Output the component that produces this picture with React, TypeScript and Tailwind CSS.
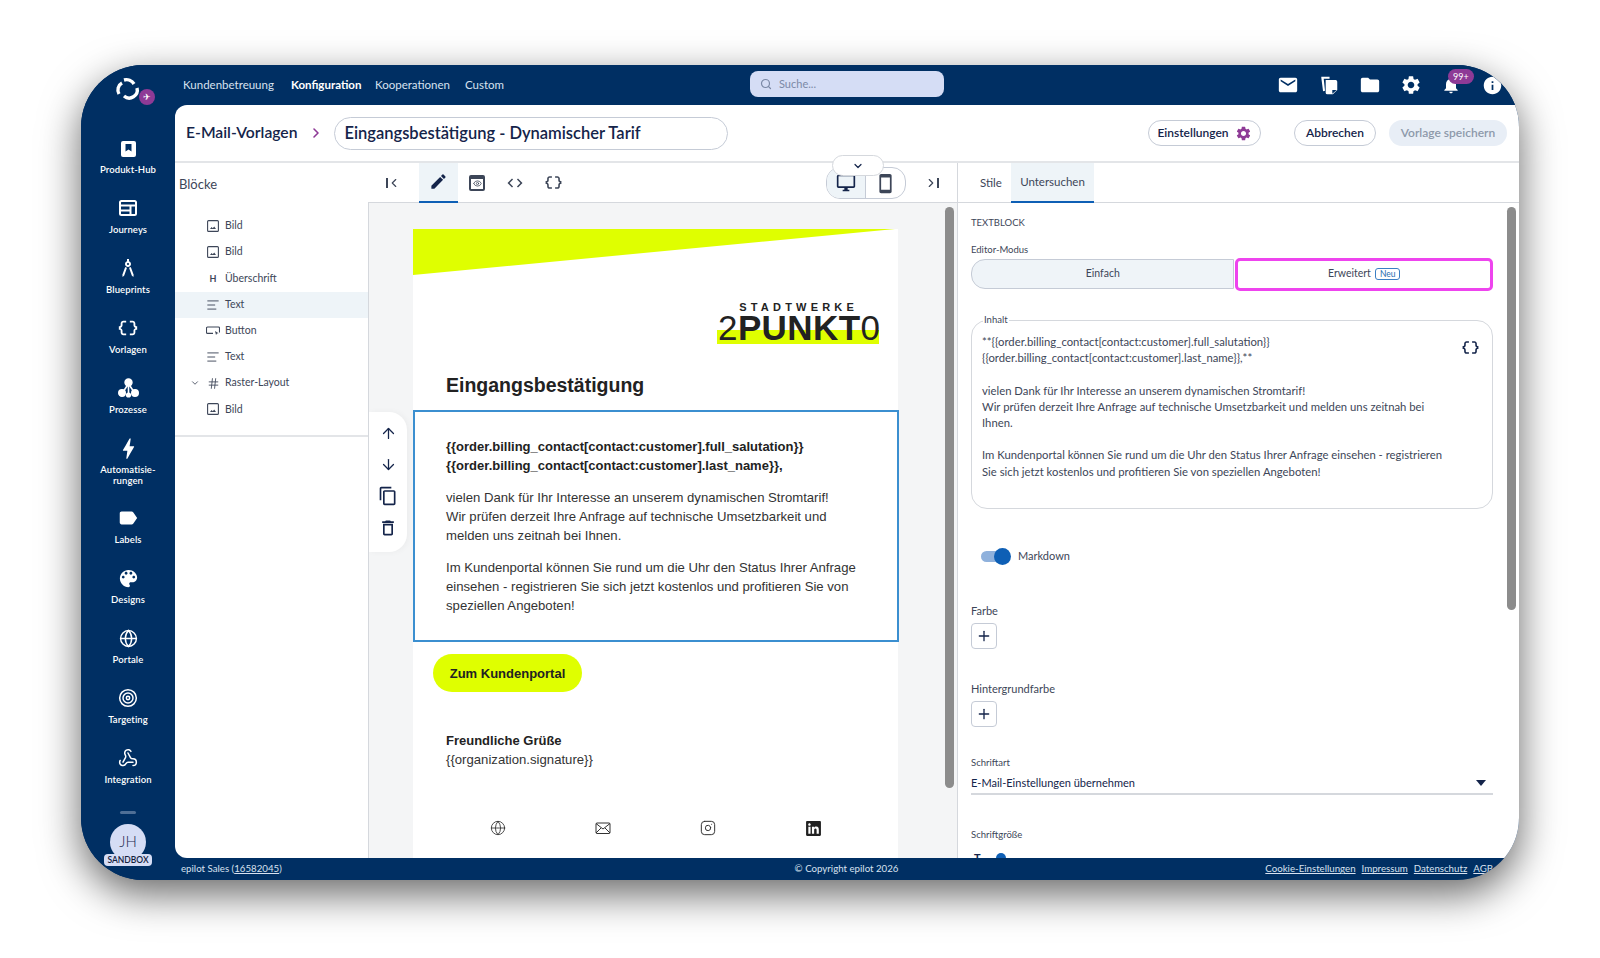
import React from 'react'
import { Search, ChevronRight, ChevronDown, ChevronLeft, Globe, Hash, AlignLeft, Target, Webhook, Instagram, Eye, ArrowUp, ArrowDown, Plus } from 'lucide-react'
import { FaLinkedin } from 'react-icons/fa'

const navy = 'bg-[#002f63]'

// material style glyphs, lucide has no filled versions of these
const paths = {
  mail: 'M20 4H4c-1.1 0-1.99.9-1.99 2L2 18c0 1.1.9 2 2 2h16c1.1 0 2-.9 2-2V6c0-1.1-.9-2-2-2zm0 4-8 5-8-5V6l8 5 8-5v2z',
  folder: 'M10 4H4c-1.1 0-1.99.9-1.99 2L2 18c0 1.1.9 2 2 2h16c1.1 0 2-.9 2-2V8c0-1.1-.9-2-2-2h-8l-2-2z',
  gear: 'M19.14 12.94c.04-.3.06-.61.06-.94 0-.32-.02-.64-.07-.94l2.03-1.58a.49.49 0 0 0 .12-.61l-1.92-3.32a.488.488 0 0 0-.59-.22l-2.39.96c-.5-.38-1.03-.7-1.62-.94l-.36-2.54a.484.484 0 0 0-.48-.41h-3.84c-.24 0-.43.17-.47.41l-.36 2.54c-.59.24-1.13.57-1.62.94l-2.39-.96c-.22-.08-.47 0-.59.22L2.74 8.87c-.12.21-.08.47.12.61l2.03 1.58c-.05.3-.09.63-.09.94s.02.64.07.94l-2.03 1.58a.49.49 0 0 0-.12.61l1.92 3.32c.12.22.37.29.59.22l2.39-.96c.5.38 1.03.7 1.62.94l.36 2.54c.05.24.24.41.48.41h3.84c.24 0 .44-.17.47-.41l.36-2.54c.59-.24 1.13-.56 1.62-.94l2.39.96c.22.08.47 0 .59-.22l1.92-3.32c.12-.22.07-.47-.12-.61l-2.01-1.58zM12 15.6c-1.98 0-3.6-1.62-3.6-3.6s1.62-3.6 3.6-3.6 3.6 1.62 3.6 3.6-1.62 3.6-3.6 3.6z',
  bell: 'M12 22c1.1 0 2-.9 2-2h-4c0 1.1.89 2 2 2zm6-6v-5c0-3.07-1.64-5.64-4.5-6.32V4c0-.83-.67-1.5-1.5-1.5s-1.5.67-1.5 1.5v.68C7.63 5.36 6 7.92 6 11v5l-2 2v1h16v-1l-2-2z',
  info: 'M12 2C6.48 2 2 6.48 2 12s4.48 10 10 10 10-4.48 10-10S17.52 2 12 2zm1 15h-2v-6h2v6zm0-8h-2V7h2v2z',
  copy: 'M16 1H4c-1.1 0-2 .9-2 2v14h2V3h12V1zm3 4H8c-1.1 0-2 .9-2 2v14c0 1.1.9 2 2 2h11c1.1 0 2-.9 2-2V7c0-1.1-.9-2-2-2zm0 16H8V7h11v14z',
  trash: 'M6 19c0 1.1.9 2 2 2h8c1.1 0 2-.9 2-2V7H6v12zM8 9h8v10H8V9zm7.5-5l-1-1h-5l-1 1H5v2h14V4z',
  label: 'M17.63 5.84C17.27 5.33 16.67 5 16 5L5 5.01C3.9 5.01 3 5.9 3 7v10c0 1.1.9 1.99 2 1.99L16 19c.67 0 1.27-.33 1.63-.84L22 12l-4.37-6.16z',
  palette: 'M12 3c-4.97 0-9 4.03-9 9s4.03 9 9 9c.83 0 1.5-.67 1.5-1.5 0-.39-.15-.74-.39-1.01-.23-.26-.38-.61-.38-.99 0-.83.67-1.5 1.5-1.5H16c2.76 0 5-2.24 5-5 0-4.42-4.03-8-9-8zm-5.5 9c-.83 0-1.5-.67-1.5-1.5S5.67 9 6.5 9 8 9.67 8 10.5 7.33 12 6.5 12zm3-4C8.67 8 8 7.33 8 6.5S8.67 5 9.5 5s1.5.67 1.5 1.5S10.33 8 9.5 8zm5 0c-.83 0-1.5-.67-1.5-1.5S13.67 5 14.5 5s1.5.67 1.5 1.5S15.33 8 14.5 8zm3 4c-.83 0-1.5-.67-1.5-1.5S16.67 9 17.5 9s1.5.67 1.5 1.5-.67 1.5-1.5 1.5z',
  bolt: 'M11 21h-1l1-7H7.5c-.58 0-.57-.32-.38-.66.19-.34.05-.08.07-.12C8.48 10.94 10.42 7.54 13 3h1l-1 7h3.5c.49 0 .56.33.47.51l-.07.15C12.96 17.55 11 21 11 21z',
  desktop: 'M21 2H3c-1.1 0-2 .9-2 2v12c0 1.1.9 2 2 2h7v2H8v2h8v-2h-2v-2h7c1.1 0 2-.9 2-2V4c0-1.1-.9-2-2-2zm0 14H3V4h18v12z',
  phone: 'M17 1.01L7 1c-1.1 0-2 .9-2 2v18c0 1.1.9 2 2 2h10c1.1 0 2-.9 2-2V3c0-1.1-.9-1.99-2-1.99zM17 19H7V5h10v14z',
  edit: 'M3 17.25V21h3.75L17.81 9.94l-3.75-3.75L3 17.25zM20.71 7.04a1 1 0 0 0 0-1.41l-2.34-2.34a1 1 0 0 0-1.41 0l-1.83 1.83 3.75 3.75 1.83-1.83z',
  blueprint: 'M6.36 18.78L6.61 21l1.62-1.54 2.77-7.6c-.68-.17-1.28-.51-1.77-.98L6.36 18.78zm8.41-7.9c-.49.47-1.1.81-1.77.98l2.77 7.6L17.39 21l.26-2.22-2.88-7.9zM15 8c0-1.3-.84-2.4-2-2.82V3h-2v2.18C9.84 5.6 9 6.7 9 8c0 1.66 1.34 3 3 3s3-1.34 3-3zm-3 1c-.55 0-1-.45-1-1s.45-1 1-1 1 .45 1 1-.45 1-1 1z',
  braces: 'M4 7v2c0 .55-.45 1-1 1H2v4h1c.55 0 1 .45 1 1v2c0 1.65 1.35 3 3 3h3v-2H7c-.55 0-1-.45-1-1v-2c0-1.3-.84-2.42-2-2.83v-.34C5.16 11.42 6 10.3 6 9V7c0-.55.45-1 1-1h3V4H7C5.35 4 4 5.35 4 7zm17 3c-.55 0-1-.45-1-1V7c0-1.65-1.35-3-3-3h-3v2h3c.55 0 1 .45 1 1v2c0 1.3.84 2.42 2 2.83v.34c-1.16.41-2 1.52-2 2.83v2c0 .55-.45 1-1 1h-3v2h3c1.65 0 3-1.35 3-3v-2c0-.55.45-1 1-1h1v-4h-1z',
  code: 'M9.4 16.6L4.8 12l4.6-4.6L8 6l-6 6 6 6 1.4-1.4zm5.2 0l4.6-4.6-4.6-4.6L16 6l6 6-6 6-1.4-1.4z',
}

function Glyph({ d, size = 20, color = '#fff' }: { d: string; size?: number; color?: string }) {
  return (
    <svg width={size} height={size} viewBox="0 0 24 24" fill={color} className="shrink-0">
      <path d={d} />
    </svg>
  )
}

function ProduktIcon() {
  return (
    <svg width="17" height="17" viewBox="0 0 17 17">
      <path fill="#fff" d="M3 1h11a2 2 0 0 1 2 2v12a2 2 0 0 1-2 2H3a2 2 0 0 1-2-2V3a2 2 0 0 1 2-2z" />
      <path fill="#002f63" d="M5.5 4h6v7.5l-3-2-3 2z" />
    </svg>
  )
}

function JourneyIcon() {
  return (
    <svg width="18" height="16" viewBox="0 0 18 16" fill="none" stroke="#fff" strokeWidth="2">
      <rect x="1" y="1" width="16" height="14" rx="1.5" />
      <path d="M1 5.5h16M1 10.5h10M11.5 5.5V15" />
    </svg>
  )
}

function ProcessIcon() {
  return (
    <svg width="21" height="21" viewBox="0 0 21 21" fill="#fff" stroke="#fff" strokeWidth="1.6">
      <circle cx="10.5" cy="4.5" r="3.4" />
      <circle cx="4" cy="15" r="3.2" />
      <circle cx="17" cy="15" r="3.2" />
      <circle cx="10.5" cy="17" r="1.8" />
      <path d="M10.5 7v9M9 8l-4 6M12 8l4 6" fill="none" />
    </svg>
  )
}

function BlockImage() {
  return (
    <svg width="12" height="12" viewBox="0 0 12 12" fill="none" stroke="#3d4658" strokeWidth="1.1">
      <rect x=".6" y=".6" width="10.8" height="10.8" rx="1" />
      <path d="M3 9l1.6-2 1.2 1.2L7.2 6.6 9 9z" fill="#3d4658" stroke="none" />
    </svg>
  )
}

function BlockButton() {
  return (
    <svg width="14" height="10" viewBox="0 0 14 10" fill="none" stroke="#3d4658" strokeWidth="1.1">
      <path d="M7 7.4H1.5a1 1 0 0 1-1-1V2a1 1 0 0 1 1-1h11a1 1 0 0 1 1 1v4.4" />
      <path d="M9 5l1 4 1-1.5 1.6-.3z" fill="#3d4658" stroke="none" />
    </svg>
  )
}

function CopiesIcon() {
  return (
    <svg width="22" height="22" viewBox="0 0 20 20">
      <path fill="#fff" d="M3 2.5h7.5v1.8H5.2l1.2 11-1.8.4L3 3.5z" />
      <path fill="#fff" d="M7 5.5h9a1.5 1.5 0 0 1 1.5 1.5v7.5l-4 4H8.5A1.5 1.5 0 0 1 7 17z" />
      <path fill="#002f63" d="M13 18v-3.5h4z" />
    </svg>
  )
}

function LetterIcon() {
  return (
    <svg width="16" height="16" viewBox="0 0 16 16" fill="none" stroke="#333" strokeWidth="1">
      <rect x="1" y="3" width="14" height="10.5" rx="1" />
      <path d="M1 3.5l7 5.5 7-5.5M1 13l5-5M15 13l-5-5" />
    </svg>
  )
}

const sideItems = [
  { label: 'Produkt-Hub', icon: <ProduktIcon /> },
  { label: 'Journeys', icon: <JourneyIcon /> },
  { label: 'Blueprints', icon: <Glyph d={paths.blueprint} size={24} /> },
  { label: 'Vorlagen', icon: <Glyph d={paths.braces} size={22} /> },
  { label: 'Prozesse', icon: <ProcessIcon /> },
  { label: 'Automatisie-\nrungen', icon: <Glyph d={paths.bolt} size={27} />, tall: true },
  { label: 'Labels', icon: <Glyph d={paths.label} size={22} /> },
  { label: 'Designs', icon: <Glyph d={paths.palette} size={23} /> },
  { label: 'Portale', icon: <Globe size={19} color="#fff" strokeWidth={1.8} /> },
  { label: 'Targeting', icon: <Target size={20} color="#fff" strokeWidth={1.8} /> },
  { label: 'Integration', icon: <Webhook size={20} color="#fff" strokeWidth={1.8} /> },
]

const blocks = [
  { label: 'Bild', icon: <BlockImage /> },
  { label: 'Bild', icon: <BlockImage /> },
  { label: 'Überschrift', icon: <span className="text-[9px] font-bold leading-none">H</span> },
  { label: 'Text', icon: <AlignLeft size={14} strokeWidth={1.6} />, active: true },
  { label: 'Button', icon: <BlockButton /> },
  { label: 'Text', icon: <AlignLeft size={14} strokeWidth={1.6} /> },
  { label: 'Raster-Layout', icon: <Hash size={13} strokeWidth={1.6} />, expand: true },
  { label: 'Bild', icon: <BlockImage /> },
]

function Sidebar() {
  return (
    <aside className={`${navy} flex w-[94px] shrink-0 flex-col items-center text-white`}>
      <div className="relative mt-[9px] h-[40px] w-[44px]">
        <svg width="26" height="26" viewBox="0 0 26 26" fill="none" stroke="#fff" strokeWidth="3.4" className="absolute left-[9px] top-[3px]">
          <path d="M4 17a8 8 0 0 1 3-11" />
          <path d="M9 3a9 9 0 0 1 10 4" />
          <path d="M22 11a8 8 0 0 1-13 8" />
        </svg>
        <span className="absolute left-[33px] top-[15px] flex h-[16px] w-[16px] items-center justify-center rounded-full bg-[#8e3a96] text-[9px]">✈</span>
      </div>
      <div className="mt-[23px] flex flex-col">
        {sideItems.map((item) => (
          <div key={item.label} className={`flex w-[94px] flex-col items-center ${item.tall ? 'h-[70px]' : 'h-[60px]'}`}>
            <div className="flex h-[22px] items-center justify-center">{item.icon}</div>
            <div className="mt-[5px] whitespace-pre-line text-center text-[9.5px] font-semibold leading-[11px] tracking-[0.1px]">{item.label}</div>
          </div>
        ))}
      </div>
      <div className="mt-[4px] h-[3px] w-[16px] rounded bg-[#4f6f96]" />
      <div className="relative mt-[10px] flex h-[36px] w-[36px] items-center justify-center rounded-full bg-[#d5ddf5] pb-[2px] text-[15px] font-light text-[#1d2b50]">
        JH
        <span className="absolute left-[-6px] top-[30px] w-[48px] rounded-[4px] bg-[#d5ddf5] text-center text-[8.5px] font-semibold leading-[12px] text-[#14213d]">SANDBOX</span>
      </div>
    </aside>
  )
}

function TopBar() {
  return (
    <header className={`${navy} flex h-[40px] shrink-0 items-center text-white`}>
      <nav className="ml-[8px] flex w-[567px] items-center text-[11.5px] text-[#d8e2f0]">
        <span className="w-[108px]">Kundenbetreuung</span>
        <span className="w-[84px] font-bold text-white">Konfiguration</span>
        <span className="w-[90px]">Kooperationen</span>
        <span>Custom</span>
      </nav>
      <div className="mb-[2px] flex h-[26px] w-[194px] items-center gap-[7px] rounded-lg bg-[#d5ddf5] px-[10px] text-[11px] text-[#7b89a6]">
        <Search size={12} strokeWidth={2.4} />
        Suche...
      </div>
      <div className="ml-auto mr-[16px] flex items-center gap-[19px]">
        <Glyph d={paths.mail} size={22} />
        <CopiesIcon />
        <Glyph d={paths.folder} size={22} />
        <Glyph d={paths.gear} size={22} />
        <div className="relative mr-[2px]">
          <Glyph d={paths.bell} size={20} />
          <span className="absolute left-[7px] top-[-6px] rounded-full bg-[#8e3a96] px-[5px] text-[9px] leading-[15px]">99+</span>
        </div>
        <Glyph d={paths.info} size={21} />
      </div>
    </header>
  )
}

function PageHeader() {
  return (
    <div className="flex h-[58px] shrink-0 items-center border-b-2 border-[#e3e5e8] text-[#14244a]">
      <span className="ml-[11px] text-[15.7px] font-semibold">E-Mail-Vorlagen</span>
      <ChevronRight size={16} className="ml-[10px] text-[#8e3a96]" strokeWidth={2.4} />
      <div className="ml-[10px] flex h-[33px] w-[394px] items-center rounded-full border border-[#c5cbd6] pl-[10px] text-[16.5px] font-semibold">
        Eingangsbestätigung - Dynamischer Tarif
      </div>
      <div className="ml-auto mr-[12px] flex items-center text-[12px] font-semibold">
        <div className="flex h-[26px] w-[113px] items-center justify-center gap-[6px] rounded-full border border-[#c5cbd6]">
          Einstellungen
          <Glyph d={paths.gear} size={17} color="#8e3a96" />
        </div>
        <div className="ml-[33px] flex h-[26px] w-[82px] items-center justify-center rounded-full border border-[#c5cbd6]">Abbrechen</div>
        <div className="ml-[13px] flex h-[26px] w-[118px] items-center justify-center rounded-full bg-[#e8eef6] text-[#8d99aa]">Vorlage speichern</div>
      </div>
    </div>
  )
}

function BlocksPanel() {
  return (
    <div className="flex w-[193px] shrink-0 flex-col">
      <div className="flex h-[44px] items-center pl-[4px] text-[13px] text-[#3d4658]">Blöcke</div>
      <div className="border-b-2 border-[#e3e5e8] pb-[12px] pt-[6px]">
        {blocks.map((b, i) => (
          <div key={i} className={`relative flex h-[26.2px] items-center text-[10.5px] text-[#3d4658] ${b.active ? 'bg-[#eef4f8]' : ''}`}>
            {b.expand && <ChevronDown size={10} className="absolute left-[15px] top-[8px]" />}
            <span className="ml-[29px] flex w-[18px] justify-center">{b.icon}</span>
            <span className="ml-[3px]">{b.label}</span>
          </div>
        ))}
      </div>
    </div>
  )
}

function Toolbar() {
  return (
    <div className="relative flex h-[40px] items-center border-b border-[#d5d8dd] text-[#3d4658]">
      <div className="ml-[18px] flex w-[33px] items-center">
        <span className="h-[10px] w-[1.5px] bg-[#3d4658]" />
        <ChevronLeft size={14} className="ml-[-1px]" />
      </div>
      <div className="flex h-[40px] w-[39px] items-center justify-center border-b-2 border-[#0e5fb5] bg-[#eef4f8]">
        <Glyph d={paths.edit} size={19} color="#14244a" />
      </div>
      <div className="flex w-[38px] justify-center">
        <div className="flex h-[16px] w-[16px] items-center justify-center rounded-[2px] border-2 border-t-4 border-[#3d4658]">
          <Eye size={9} />
        </div>
      </div>
      <div className="flex w-[38px] justify-center">
        <Glyph d={paths.code} size={18} color="#3d4658" />
      </div>
      <div className="flex w-[38px] justify-center">
        <Glyph d={paths.braces} size={19} color="#3d4658" />
      </div>
      <div className="absolute left-[458px] top-[4px] flex h-[32px] w-[80px] overflow-hidden rounded-[14px] border border-[#c5cbd6]">
        <div className="flex w-[40px] items-center justify-center border-r border-[#c5cbd6] bg-[#eef4f8]">
          <Glyph d={paths.desktop} size={20} color="#14244a" />
        </div>
        <div className="flex w-[40px] items-center justify-center">
          <Glyph d={paths.phone} size={21} color="#3d4658" />
        </div>
      </div>
      <div className="absolute left-[464px] top-[-8px] flex h-[21px] w-[52px] items-center justify-center rounded-full border border-[#d5d8dd] bg-white">
        <ChevronDown size={12} color="#14244a" strokeWidth={2.4} />
      </div>
      <div className="absolute left-[556px] top-[13px] flex items-center">
        <ChevronRight size={14} className="mr-[-1px]" />
        <span className="h-[10px] w-[1.5px] bg-[#3d4658]" />
      </div>
    </div>
  )
}

function EmailPreview() {
  return (
    <div className="relative h-[655px] overflow-hidden bg-[#f4f5f6]">
      <div className="absolute left-[576px] top-[4px] h-[581px] w-[9px] rounded-[5px] bg-[#8c8c8c]" />
      <div className="ml-[44px] mt-[26px] h-[700px] w-[485px] bg-white font-['Liberation_Sans',sans-serif] text-[13.15px] leading-[19px] text-[#333]">
        <svg width="485" height="46" viewBox="0 0 485 46" className="block">
          <polygon points="0,0 482,0 0,46" fill="#dfff00" />
        </svg>
        <div className="relative h-[75px]">
          <div className="absolute right-[40px] top-[26px] text-[11px] font-bold leading-[12px] tracking-[4.2px] text-[#222]">STADTWERKE</div>
          <div className="absolute left-[304px] top-[55px] h-[14px] w-[162px] bg-[#dfff00]" />
          <div className="absolute left-[305px] top-[39px] flex text-[35px] font-bold leading-[28px] tracking-[0.4px] text-[#222]">
            <span className="font-normal">2</span>PUNKT<span className="font-normal">0</span>
          </div>
        </div>
        <h1 className="mt-[23px] pl-[33px] text-[19.5px] font-bold leading-[24px] text-[#222]">Eingangsbestätigung</h1>
        <div className="mt-[13px] h-[232px] w-[486px] border-2 border-[#3b8fd0] pl-[31px] pr-[30px] pt-[25px]">
          <p className="text-[13px] font-bold text-[#222]">
            {'{{order.billing_contact[contact:customer].full_salutation}}'}
            <br />
            {'{{order.billing_contact[contact:customer].last_name}},'}
          </p>
          <p className="mt-[13px]">
            vielen Dank für Ihr Interesse an unserem dynamischen Stromtarif!
            <br />
            Wir prüfen derzeit Ihre Anfrage auf technische Umsetzbarkeit und
            <br />
            melden uns zeitnah bei Ihnen.
          </p>
          <p className="mt-[13px]">
            Im Kundenportal können Sie rund um die Uhr den Status Ihrer Anfrage
            <br />
            einsehen - registrieren Sie sich jetzt kostenlos und profitieren Sie von
            <br />
            speziellen Angeboten!
          </p>
        </div>
        <div className="ml-[20px] mt-[12px] flex h-[38px] w-[149px] items-center justify-center rounded-full bg-[#dfff00] text-[13px] font-bold text-[#222]">Zum Kundenportal</div>
        <div className="ml-[33px] mt-[39px]">
          <div className="text-[13px] font-bold text-[#222]">Freundliche Grüße</div>
          <div>{'{{organization.signature}}'}</div>
        </div>
        <div className="mt-[51px] flex text-[#333]">
          <div className="ml-[77px] w-[105px]"><Globe size={16} strokeWidth={1.3} /></div>
          <div className="w-[105px]"><LetterIcon /></div>
          <div className="w-[105px]"><Instagram size={16} strokeWidth={1.5} /></div>
          <div><FaLinkedin size={17} color="#222" /></div>
        </div>
      </div>
      <div className="absolute left-0 top-[209px] flex h-[140px] w-[38px] flex-col items-center rounded-r-[18px] bg-white pt-[5px] text-[#14244a] shadow-[2px_0_6px_rgba(0,0,0,0.04)]">
        <div className="flex h-[32px] items-center"><ArrowUp size={17} strokeWidth={1.8} /></div>
        <div className="flex h-[31px] items-center"><ArrowDown size={17} strokeWidth={1.8} /></div>
        <div className="flex h-[32px] items-center"><Glyph d={paths.copy} size={20} color="#14244a" /></div>
        <div className="flex h-[32px] items-center"><Glyph d={paths.trash} size={20} color="#14244a" /></div>
      </div>
    </div>
  )
}

function InspectorPanel() {
  return (
    <div className="flex w-[562px] shrink-0 flex-col overflow-hidden border-l border-[#d5d8dd]">
      <div className="flex h-[40px] shrink-0 items-center border-b border-[#d5d8dd] text-[11.5px] text-[#3d4658]">
        <span className="ml-[22px] w-[31px]">Stile</span>
        <div className="flex h-[40px] w-[83px] items-center justify-center border-b-2 border-[#0e5fb5] bg-[#eef4f8]">Untersuchen</div>
      </div>
      <div className="relative flex-1 overflow-hidden pl-[13px] pr-[26px] text-[#3d4658]">
        <div className="absolute right-[3px] top-[4px] h-[403px] w-[9px] rounded-[5px] bg-[#8c8c8c]" />
        <div className="mt-[14px] text-[9.5px] leading-[12px]">TEXTBLOCK</div>
        <div className="mt-[15px] text-[9.5px] leading-[12px]">Editor-Modus</div>
        <div className="relative mt-[3px] flex h-[30px] items-center text-[10.5px]">
          <div className="flex h-[30px] w-[264px] items-center justify-center rounded-l-[14px] border border-[#c5cbd6] bg-[#eff4f8]">Einfach</div>
          <div className="ml-[1px] flex h-[33px] w-[258px] items-center justify-center gap-[4px] rounded-[5px] border-[3px] border-[#ee44ee] bg-white">
            Erweitert
            <span className="rounded-[3px] border border-[#3b7fc4] px-[4px] text-[8.5px] leading-[10px] text-[#2a6db0]">Neu</span>
          </div>
        </div>
        <div className="relative mt-[31px] h-[189px] rounded-[16px] border border-[#d5d8dd] px-[10px] pt-[13px] text-[11.3px] leading-[16.2px]">
          <span className="absolute left-[11px] top-[-7px] bg-white px-[1px] text-[9.5px] leading-[12px]">Inhalt</span>
          <div className="absolute right-[12px] top-[17px]"><Glyph d={paths.braces} size={19} color="#14244a" /></div>
          {'**{{order.billing_contact[contact:customer].full_salutation}}'}
          <br />
          {'{{order.billing_contact[contact:customer].last_name}},**'}
          <br />
          <br />
          vielen Dank für Ihr Interesse an unserem dynamischen Stromtarif!
          <br />
          Wir prüfen derzeit Ihre Anfrage auf technische Umsetzbarkeit und melden uns zeitnah bei
          <br />
          Ihnen.
          <br />
          <br />
          Im Kundenportal können Sie rund um die Uhr den Status Ihrer Anfrage einsehen - registrieren
          <br />
          Sie sich jetzt kostenlos und profitieren Sie von speziellen Angeboten!
        </div>
        <div className="ml-[10px] mt-[39px] flex items-center text-[11px]">
          <div className="relative h-[11px] w-[29px] rounded-full bg-[#8fb1dc]">
            <span className="absolute right-[-1px] top-[-3px] h-[17px] w-[17px] rounded-full bg-[#0e5fb5]" />
          </div>
          <span className="ml-[8px]">Markdown</span>
        </div>
        <div className="mt-[39px] text-[11px] leading-[14px]">Farbe</div>
        <div className="mt-[5px] flex h-[26px] w-[26px] items-center justify-center rounded-[4px] border border-[#c5cbd6] text-[#14244a]"><Plus size={16} /></div>
        <div className="mt-[33px] text-[11px] leading-[14px]">Hintergrundfarbe</div>
        <div className="mt-[5px] flex h-[26px] w-[26px] items-center justify-center rounded-[4px] border border-[#c5cbd6] text-[#14244a]"><Plus size={16} /></div>
        <div className="mt-[30px] text-[9.5px] leading-[12px]">Schriftart</div>
        <div className="mt-[5px] flex h-[21px] items-center justify-between border-b-2 border-[#d5d8dd] text-[11px] text-[#14244a]">
          E-Mail-Einstellungen übernehmen
          <svg width="10" height="6" viewBox="0 0 10 6" className="mr-[7px]"><path d="M0 0h10L5 6z" fill="#14244a" /></svg>
        </div>
        <div className="mt-[34px] text-[9.5px] leading-[12px]">Schriftgröße</div>
        <div className="mt-[12px] flex items-start">
          <span className="ml-[3px] text-[11px] font-bold leading-[10px] text-[#14244a]">T</span>
          <span className="ml-[15px] h-[10px] w-[10px] rounded-full bg-[#0e5fb5]" />
        </div>
      </div>
    </div>
  )
}

export default function App() {
  return (
    <div className="h-[958px] w-[1600px] overflow-hidden bg-white pl-[81px] pt-[65px] font-['Lato',sans-serif]">
      <div className="flex h-[815px] w-[1438px] overflow-hidden rounded-[62px] bg-[#002f63] shadow-[0_14px_40px_rgba(0,0,0,0.6)]">
        <Sidebar />
        <div className="flex min-w-0 flex-1 flex-col">
          <TopBar />
          <main className="flex min-h-0 flex-1 flex-col overflow-hidden rounded-l-[12px] bg-white">
            <PageHeader />
            <div className="flex min-h-0 flex-1">
              <BlocksPanel />
              <div className="flex w-[589px] shrink-0 flex-col">
                <Toolbar />
                <div className="border-l border-[#d5d8dd]">
                  <EmailPreview />
                </div>
              </div>
              <InspectorPanel />
            </div>
          </main>
          <footer className="flex h-[22px] shrink-0 items-center justify-between pb-[1px] pl-[6px] pr-[26px] text-[9.7px] text-[#d8e2f0]">
            <span>epilot Sales (<span className="underline">16582045</span>)</span>
            <span className="ml-[146px]">© Copyright epilot 2026</span>
            <span className="flex gap-[6px] underline">
              <span>Cookie-Einstellungen</span>
              <span>Impressum</span>
              <span>Datenschutz</span>
              <span>AGB</span>
            </span>
          </footer>
        </div>
      </div>
    </div>
  )
}
